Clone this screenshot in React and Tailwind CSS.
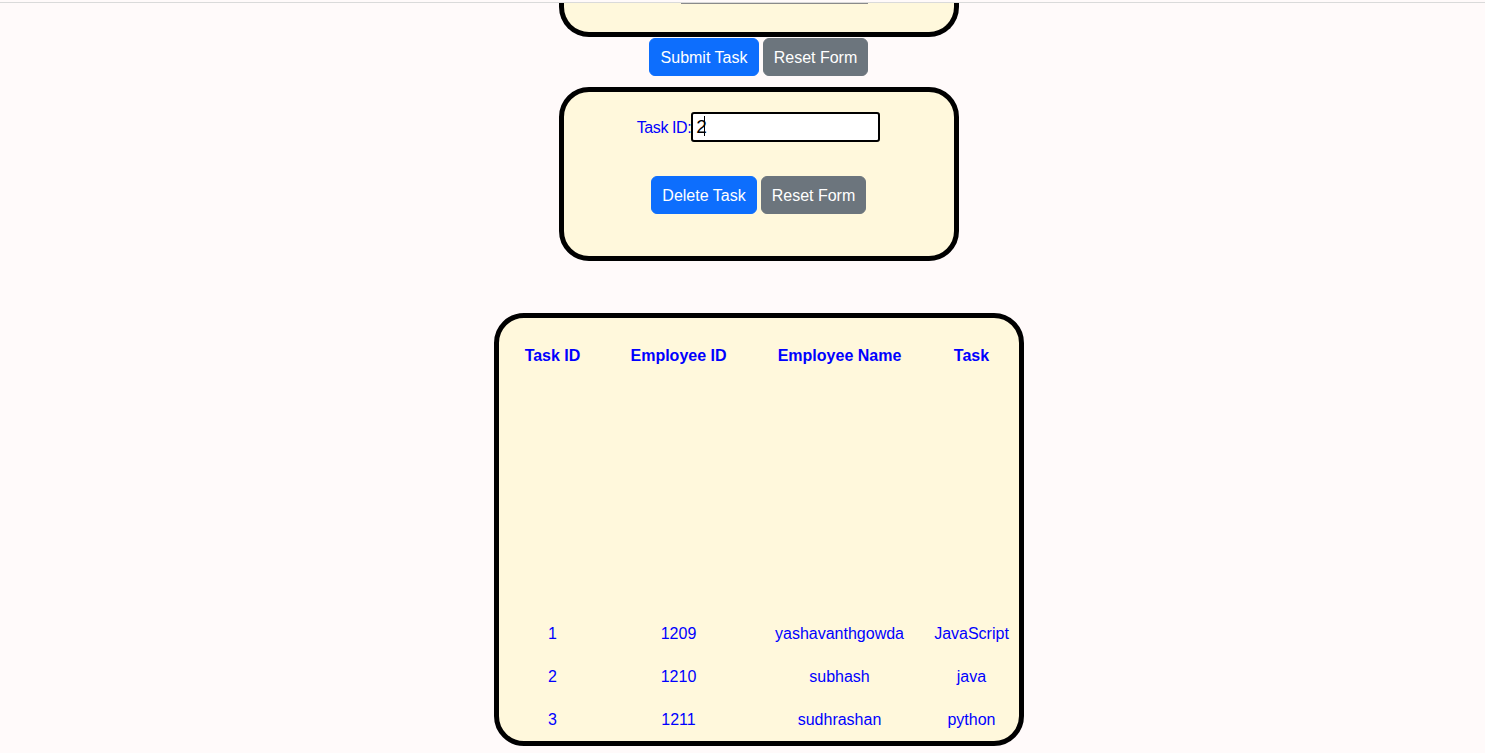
import React from "react";

const tasks = [
  { id: 1, empId: 1209, name: "yashavanthgowda", task: "JavaScript" },
  { id: 2, empId: 1210, name: "subhash", task: "java" },
  { id: 3, empId: 1211, name: "sudhrashan", task: "python" },
];

const Btn = ({ kind, children, w }) => (
  <button
    className={
      kind === "primary"
        ? `${w} h-[38px] pt-[2px] whitespace-nowrap text-base leading-6 text-white bg-[#0d6efd] border border-[#0d6efd] rounded-md`
        : `${w} h-[38px] pt-[2px] whitespace-nowrap text-base leading-6 text-white bg-[#6c757d] border border-[#6c757d] rounded-md`
    }
  >
    {children}
  </button>
);

export default function App() {
  return (
    <div className="min-h-screen bg-[#fffafa] font-['Liberation_Sans',Arial,sans-serif]">
      <div className="h-[3px] border-b border-[#dadada]" />

      <div className="pl-[32px] flex flex-col items-center">
        {/* bottom of the add-task form, scrolled off */}
        <div className="w-[400px] h-[34px] border-[5px] border-t-0 border-black rounded-b-[30px] bg-[#fff8dc]">
          <div className="ml-[117px] w-[187px] h-px bg-[#8a8a8a]" />
        </div>

        <div className="mt-px flex gap-1">
          <Btn kind="primary" w="w-[110px]">Submit Task</Btn>
          <Btn kind="secondary" w="w-[105px]">Reset Form</Btn>
        </div>

        {/* delete form */}
        <div className="mt-[11px] w-[400px] h-[174px] border-[5px] border-black rounded-[30px] bg-[#fff8dc] pt-[20px] flex flex-col items-center">
          <div className="flex items-center h-[30px]">
            <label className="text-base tracking-[-0.4px] text-[#0000ff] pt-px">Task ID:</label>
            <div className="relative">
              <input
                readOnly
                value="2"
                className="w-[189px] h-[30px] border-2 border-black rounded-[3px] bg-white px-[3px] text-[19px] text-black outline-none"
              />
              <span className="absolute left-[13px] top-[4px] w-px h-[20px] bg-black" />
            </div>
          </div>
          <div className="mt-[34px] flex gap-1">
            <Btn kind="primary" w="w-[106px]">Delete Task</Btn>
            <Btn kind="secondary" w="w-[105px]">Reset Form</Btn>
          </div>
        </div>

        {/* task table */}
        <div className="mt-[52px] w-[530px] h-[433px] border-[5px] border-black rounded-[30px] bg-[#fff8dc] pt-[16px] px-[2px]">
          <div className="grid grid-cols-[104px_148px_174px_90px] h-[43px] items-center text-center font-bold text-[#0000ff]">
            <div>Task ID</div>
            <div>Employee ID</div>
            <div>Employee Name</div>
            <div>Task</div>
          </div>
          <div className="h-[235px]" />
          {tasks.map((t) => (
            <div
              key={t.id}
              className="grid grid-cols-[104px_148px_174px_90px] h-[43px] items-center text-center text-[#0000ff]"
            >
              <div>{t.id}</div>
              <div>{t.empId}</div>
              <div>{t.name}</div>
              <div>{t.task}</div>
            </div>
          ))}
        </div>
      </div>
    </div>
  );
}
